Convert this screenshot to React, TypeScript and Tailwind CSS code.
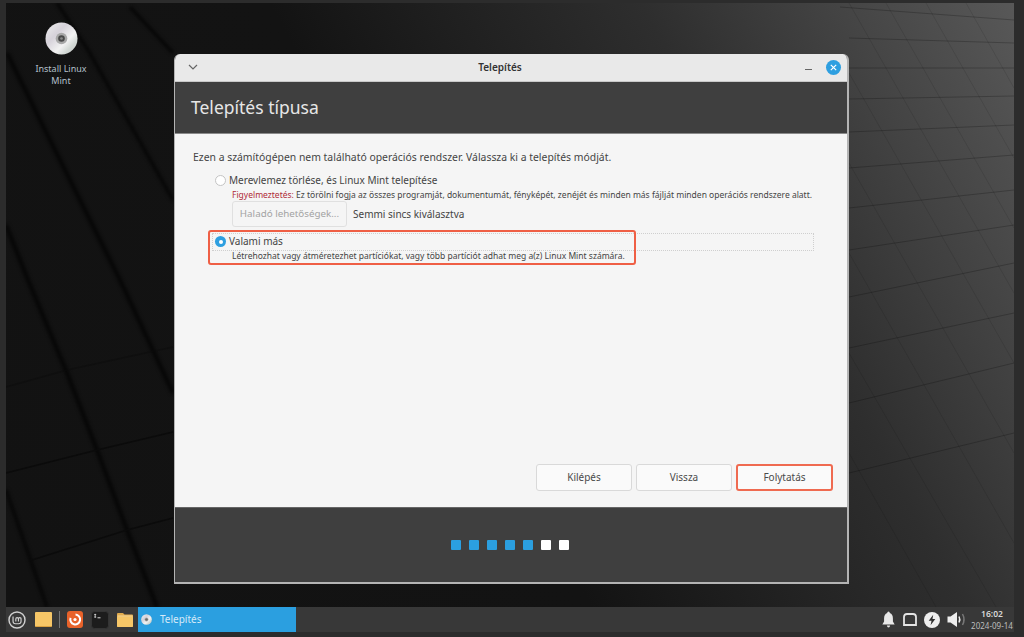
const font = { fontFamily: '"Noto Sans", sans-serif' };

function DiscIcon({ size }: { size: number }) {
  return (
    <svg width={size} height={size} viewBox="0 0 34 34">
      <defs>
        <linearGradient id="disc" x1="0" y1="0" x2="1" y2="1">
          <stop offset="0" stopColor="#f0f0f0" />
          <stop offset="0.35" stopColor="#d6d2da" />
          <stop offset="0.62" stopColor="#f2f2f2" />
          <stop offset="0.78" stopColor="#d2d8d4" />
          <stop offset="1" stopColor="#c4c4c4" />
        </linearGradient>
      </defs>
      <circle cx="17" cy="17" r="16.5" fill="url(#disc)" />
      <circle cx="17" cy="17" r="6" fill="#a8a8a8" />
      <circle cx="17" cy="17" r="3.4" fill="#4a4a4a" />
      <circle cx="17" cy="17" r="1.4" fill="#8a8a8a" />
    </svg>
  );
}

function Wallpaper() {
  return (
    <svg className="absolute inset-0" width="1008" height="604" viewBox="0 0 1008 604">
      <g stroke="#080808" fill="none" className="blur-[1.5px]">
        <path d="M0 222 L22 277 L61 370 L91 447 L121 527 L151 604" strokeWidth="5" />
        <path d="M1 50 L34 117 L114 277 L167 390" strokeWidth="5" />
        <path d="M51 0 L82 47 L167 197" strokeWidth="4" />
        <path d="M124 4 L167 50" strokeWidth="4" />
        <path d="M0 487 L41 604" strokeWidth="4" />
      </g>
      <g stroke="#0b0b0b" fill="none" strokeWidth="1.5" className="blur-[0.5px]">
        <path d="M0 470 L91 447 L167 429" />
        <path d="M26 557 L121 527 L167 515" />
        <path d="M0 384 L61 367 L167 344" opacity="0.5" />
      </g>
      <g stroke="#000" strokeOpacity="0.22" fill="none" strokeWidth="1">
        <path d="M834 4 L1008 17" />
        <path d="M843 35 L1008 40" />
        <path d="M843 65 L1008 65" />
        <path d="M843 96 L1008 93" />
        <path d="M843 129 L1008 122" />
        <path d="M843 165 L1008 152" />
        <path d="M843 205 L1008 187" />
        <path d="M843 247 L1008 222" />
        <path d="M843 294 L1008 260" />
        <path d="M843 345 L1008 310" />
        <path d="M843 400 L1008 360" />
        <path d="M843 470 L1008 430" />
      </g>
      <g stroke="#000" strokeOpacity="0.1" fill="none" strokeWidth="1">
        <path d="M843 0 L1008 290" />
        <path d="M880 0 L1008 225" />
        <path d="M920 0 L1008 155" />
        <path d="M960 0 L1008 85" />
        <path d="M843 70 L1008 360" />
        <path d="M843 160 L1008 450" />
        <path d="M843 250 L1008 540" />
        <path d="M843 350 L990 604" />
        <path d="M843 450 L930 604" />
      </g>
    </svg>
  );
}

function MintLogo() {
  return (
    <svg width="18" height="18" viewBox="0 0 20 20" fill="none" stroke="#d0d0d0">
      <circle cx="10" cy="10" r="8.9" strokeWidth="1.6" />
      <path d="M5.6 6 V11.5 Q5.6 14.2 8.3 14.2 H11.8 Q14.5 14.2 14.5 11.5 V8.8 Q14.5 7.3 13 7.3 Q11.6 7.3 11.6 8.8 V11.6 M11.6 8.8 Q11.6 7.3 10.1 7.3 Q8.7 7.3 8.7 8.8 V11.6" strokeWidth="1.3" />
    </svg>
  );
}

function OrangeApp() {
  return (
    <svg width="16" height="17" viewBox="0 0 16 17">
      <rect width="16" height="17" rx="3" fill="#e8622a" />
      <path d="M8.5 3.6 A4.9 4.9 0 1 1 3.6 6.8" fill="none" stroke="#fff" strokeWidth="2" />
      <circle cx="8" cy="8.5" r="1.6" fill="#fff" />
    </svg>
  );
}

function TerminalIcon() {
  return (
    <svg width="18" height="18" viewBox="0 0 18 18">
      <rect x="0.5" y="0.5" width="17" height="17" rx="3" fill="#1c1c1c" stroke="#343434" />
      <path d="M3.2 3.6 h2 M3.2 6 h2 M4.2 2.8 v4" stroke="#ddd" strokeWidth="0.8" />
      <path d="M6.5 6.8 h3" stroke="#ddd" strokeWidth="1" />
    </svg>
  );
}

function FolderIcon() {
  return (
    <svg width="16" height="14" viewBox="0 0 16 14">
      <path d="M0 1 Q0 0 1 0 H6 L7.5 1.5 H15 Q16 1.5 16 2.5 V13 Q16 14 15 14 H1 Q0 14 0 13 Z" fill="#e2ac4e" />
      <path d="M0 3.5 H16 V13 Q16 14 15 14 H1 Q0 14 0 13 Z" fill="#f6c667" />
      <path d="M0.5 3 H15.5" stroke="#fbe3b0" strokeWidth="0.8" />
    </svg>
  );
}

function TrayIcons() {
  return (
    <div className="flex items-center">
      <svg width="13" height="17" viewBox="0 0 15 17" preserveAspectRatio="none" fill="#e8e8e8">
        <path d="M7.5 0.5 Q9 0.5 9 2 Q12.6 3 12.6 7.5 V10.5 L14.6 13.6 H0.4 L2.4 10.5 V7.5 Q2.4 3 6 2 Q6 0.5 7.5 0.5 Z" />
        <path d="M5.6 14.6 H9.4 Q9 16.6 7.5 16.6 Q6 16.6 5.6 14.6 Z" />
      </svg>
      <svg className="ml-[8px]" width="14" height="13" viewBox="0 0 14 13" fill="none" stroke="#e4e4e4" strokeWidth="1.8">
        <path d="M1 12 V4 Q1 1 4 1 H10 Q13 1 13 4 V12 Z" />
      </svg>
      <svg className="ml-[7px]" width="16" height="16" viewBox="0 0 17 17">
        <circle cx="8.5" cy="8.5" r="8.5" fill="#eeeeee" />
        <path d="M9.8 2.8 L5 9.4 H8 L7 14.2 L12 7.4 H9 Z" fill="#2e2e2e" />
      </svg>
      <svg className="ml-[7px]" width="20" height="17" viewBox="0 0 20 17" fill="none">
        <path d="M0.5 5.5 H3.5 L10 1 V16 L3.5 11.5 H0.5 Z" fill="#eeeeee" />
        <path d="M12 5.5 Q13.6 8.5 12 11.5" stroke="#eeeeee" strokeWidth="1.5" />
        <path d="M15.5 3 Q18.5 8.5 15.5 14" stroke="#777" strokeWidth="1.5" />
      </svg>
    </div>
  );
}

function FooterButton({ label, active }: { label: string; active?: boolean }) {
  return (
    <div
      className={
        "h-[27px] rounded-[3px] bg-[#fafafa] flex items-center justify-center text-[10px] text-[#4a4a4a] border " +
        (active ? "w-[97px] border-2 border-[#ef6a50]" : "w-[96px] border-[#d9d9d9]")
      }
    >
      {label}
    </div>
  );
}

export default function App() {
  const dots = [true, true, true, true, true, false, false];

  return (
    <div className="w-[1024px] h-[637px] overflow-hidden flex flex-col bg-[#2c2c2c] pt-[3px]" style={font}>
      <div className="relative h-[604px] w-[1008px] ml-[6px] shrink-0 overflow-hidden bg-[linear-gradient(62deg,#121212_0%,#131313_44%,#2e2e2e_72%,#585858_100%)]">
        <Wallpaper />

        {/* Icono del escritorio */}
        <div className="absolute left-[25px] top-[19px] w-[60px] flex flex-col items-center">
          <DiscIcon size={33} />
          <div className="mt-[8px] text-[9px] leading-[12px] text-center text-[#b4c0ca]">Install Linux Mint</div>
        </div>

        {/* Ventana */}
        <div className="absolute left-[168px] top-[51px] w-[675px] h-[530px] flex flex-col rounded-t-[6px] overflow-hidden border-l border-r-2 border-b-2 border-[#b4b4b4]">
          <div className="relative h-[28px] shrink-0 bg-[#e9e9e9] flex items-center justify-center pr-[22px] border-b border-[#c8c8c8]">
            <svg className="absolute left-[13px] top-[10px]" width="10" height="7" viewBox="0 0 10 7" fill="none" stroke="#666" strokeWidth="1.2">
              <path d="M1 1 L5 5 L9 1" />
            </svg>
            <span className="text-[10px] font-semibold text-[#333]">Telepítés</span>
            <div className="absolute right-[35px] top-[15px] w-[7px] h-px bg-[#666]" />
            <div className="absolute right-[6px] top-[6px] w-[15px] h-[15px] rounded-full bg-[#2e9fe0] flex items-center justify-center">
              <svg width="7" height="7" viewBox="0 0 7 7" stroke="#fff" strokeWidth="1.2">
                <path d="M0.8 0.8 L6.2 6.2 M6.2 0.8 L0.8 6.2" />
              </svg>
            </div>
          </div>

          <div className="h-[52px] shrink-0 bg-[#3f3f3f] flex items-center pl-[16px] text-[17.5px] text-[#e6e6e6] border-b border-[#8a8a8a]">
            Telepítés típusa
          </div>

          <div className="relative flex-1 bg-[#f5f5f5] flex flex-col pl-[18px] pr-[14px] pt-[16px] pb-[16px] text-[#444]">
            <div className="text-[10.4px] leading-[15px]">
              Ezen a számítógépen nem található operációs rendszer. Válassza ki a telepítés módját.
            </div>

            <div className="mt-[8px] ml-[22px] flex items-center h-[14px] gap-[3px] text-[10px]">
              <div className="w-[11px] h-[11px] rounded-full bg-white border border-[#c4c4c4]" />
              <span>Merevlemez törlése, és Linux Mint telepítése</span>
            </div>
            <div className="mt-[2px] ml-[39px] text-[8.5px] leading-[12px] whitespace-nowrap">
              <span className="text-[#b02a37]">Figyelmeztetés:</span> Ez törölni fogja az összes programját, dokumentumát, fényképét, zenéjét és minden más fájlját minden operációs rendszere alatt.
            </div>
            <div className="ml-[39px] flex items-center gap-[6px]">
              <div className="w-[115px] h-[26px] rounded-[3px] border border-[#e0e0e0] bg-[#f5f5f5] flex items-center justify-center text-[9.8px] text-[#a3a3a3]">
                Haladó lehetőségek...
              </div>
              <span className="text-[10px]">Semmi sincs kiválasztva</span>
            </div>

            <div className="mt-[6px] ml-[19px] w-[602px] h-[18px] border border-dotted border-[#cfcfcf] flex items-center gap-[3px] pl-[2px] pb-px text-[10px]">
              <div className="w-[11px] h-[11px] rounded-full bg-[#2e9fe0] flex items-center justify-center">
                <div className="w-[4px] h-[4px] rounded-full bg-white" />
              </div>
              <span>Valami más</span>
            </div>
            <div className="ml-[39px] mt-[-1px] text-[8.5px] leading-[12px] whitespace-nowrap">
              Létrehozhat vagy átméretezhet partíciókat, vagy több partíciót adhat meg a(z) Linux Mint számára.
            </div>

            <div className="mt-auto flex justify-end gap-[4px]">
              <FooterButton label="Kilépés" />
              <FooterButton label="Vissza" />
              <FooterButton label="Folytatás" active />
            </div>

            {/* Marco rojo de la captura */}
            <div className="absolute left-[33px] top-[96px] w-[428px] h-[35px] rounded-[3px] border-2 border-[#ef5f45]" />
          </div>

          <div className="h-[75px] shrink-0 bg-[#3f3f3f] flex items-center justify-center gap-[8px] pr-[2px] border-t border-[#666]">
            {dots.map((done, i) => (
              <div key={i} className={"w-[10px] h-[10px] rounded-[1px] " + (done ? "bg-[#2b9fe0]" : "bg-white")} />
            ))}
          </div>
        </div>
      </div>

      {/* Panel inferior */}
      <div className="h-[25px] w-[1008px] ml-[6px] shrink-0 bg-[#383838] flex items-center text-[#e0e0e0]">
        <div className="ml-[2px]"><MintLogo /></div>
        <div className="ml-[9px] w-[17px] h-[15px] rounded-[1px] bg-[#f6c667] border-b border-[#d9a040]" />
        <div className="ml-[7px] w-px h-[17px] bg-[#777]" />
        <div className="ml-[7px]"><OrangeApp /></div>
        <div className="ml-[8px]"><TerminalIcon /></div>
        <div className="ml-[8px]"><FolderIcon /></div>
        <div className="ml-[5px] w-[158px] h-[25px] bg-[#2b9fe0] flex items-center pl-[3px] gap-[8px] text-[10px] text-[#d6eaf8]">
          <DiscIcon size={11} />
          <span>Telepítés</span>
        </div>
        <div className="ml-auto flex items-center gap-[4px] pr-px">
          <TrayIcons />
          <div className="w-[42px] flex flex-col items-center leading-[10px] text-[#d8d8d8]">
            <span className="text-[8.5px] font-semibold">16:02</span>
            <span className="text-[8px] mt-[2px] text-[#bdbdbd] whitespace-nowrap">2024-09-14</span>
          </div>
        </div>
      </div>
      <div className="flex-1 bg-[#2c2c2c]" />
    </div>
  );
}
